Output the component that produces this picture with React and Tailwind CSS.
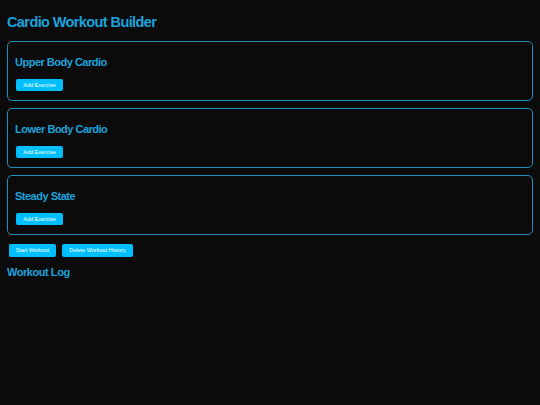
export default function App() {
  const routines = [
    "Upper Body Cardio",
    "Lower Body Cardio",
    "Steady State",
  ];

  return (
    <div
      className="min-h-[405px] w-[540px] bg-[#0b0b0b] px-[7px] pt-[13px]"
      style={{ fontFamily: '"Liberation Sans", Arial, sans-serif' }}
    >
      {/* ================= HEADER ================= */}

      <h1 className="text-[14.5px] font-bold leading-[18px] tracking-[-0.6px] text-[#1ca3dc]">
        Cardio Workout Builder
      </h1>

      {/* ================= ROUTINES ================= */}

      <div className="mt-[10px] flex flex-col gap-[7px]">
        {routines.map((name) => (
          <div
            key={name}
            className="h-[60px] rounded-[5px] border border-[#1f8fbf] px-[7px] pt-[14px]"
          >
            <h3 className="text-[11px] font-bold leading-[13px] tracking-[-0.5px] text-[#1ca3dc]">
              {name}
            </h3>

            <button className="mt-[10px] ml-[1px] h-[12px] w-[47px] rounded-[2px] bg-[#00bfff] text-[5.5px] leading-[12px] text-white">
              Add Exercise
            </button>
          </div>
        ))}
      </div>

      {/* ================= ACTIONS ================= */}

      <div className="mt-[9px] flex gap-[6px] pl-[2px]">
        <button className="h-[13px] w-[47px] rounded-[2px] bg-[#00bfff] text-[5.5px] leading-[13px] text-white">
          Start Workout
        </button>

        <button className="h-[13px] w-[71px] rounded-[2px] bg-[#00bfff] text-[5.5px] leading-[13px] text-white">
          Delete Workout History
        </button>
      </div>

      {/* ================= LOG ================= */}

      <h2 className="mt-[9px] text-[11px] font-bold leading-[13px] tracking-[-0.45px] text-[#1ca3dc]">
        Workout Log
      </h2>
    </div>
  );
}
